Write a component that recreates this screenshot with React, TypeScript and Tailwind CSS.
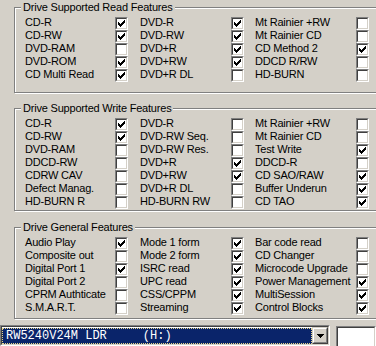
import React from "react";

type Row = [string, boolean, string, boolean, string, boolean];

const READ_ROWS: Row[] = [
  ["CD-R", true, "DVD-R", true, "Mt Rainier +RW", false],
  ["CD-RW", true, "DVD-RW", true, "Mt Rainier CD", false],
  ["DVD-RAM", false, "DVD+R", true, "CD Method 2", true],
  ["DVD-ROM", true, "DVD+RW", true, "DDCD R/RW", false],
  ["CD Multi Read", true, "DVD+R DL", false, "HD-BURN", false],
];

const WRITE_ROWS: Row[] = [
  ["CD-R", true, "DVD-R", false, "Mt Rainier +RW", false],
  ["CD-RW", true, "DVD-RW Seq.", false, "Mt Rainier CD", false],
  ["DVD-RAM", false, "DVD-RW Res.", false, "Test Write", true],
  ["DDCD-RW", false, "DVD+R", true, "DDCD-R", false],
  ["CDRW CAV", false, "DVD+RW", true, "CD SAO/RAW", true],
  ["Defect Manag.", false, "DVD+R DL", false, "Buffer Underun", true],
  ["HD-BURN R", false, "HD-BURN RW", false, "CD TAO", true],
];

const GENERAL_ROWS: Row[] = [
  ["Audio Play", true, "Mode 1 form", true, "Bar code read", false],
  ["Composite out", false, "Mode 2 form", true, "CD Changer", false],
  ["Digital Port 1", true, "ISRC read", true, "Microcode Upgrade", false],
  ["Digital Port 2", false, "UPC read", true, "Power Management", true],
  ["CPRM Authticate", false, "CSS/CPPM", true, "MultiSession", true],
  ["S.M.A.R.T.", false, "Streaming", true, "Control Blocks", true],
];

// classic 7x7 check glyph, one rect per lit pixel
const CHECK = [
  "......X",
  ".....XX",
  "X...XXX",
  "XX.XXX.",
  "XXXXX..",
  ".XXX...",
  "..X....",
];

const CheckBox = ({ checked }: { checked: boolean }) => (
  <div className="w-[13px] h-[13px] shrink-0 flex border border-t-[#808080] border-l-[#808080] border-b-white border-r-white">
    <div className="flex-1 flex items-center justify-center bg-white border border-t-[#404040] border-l-[#404040] border-b-[#d4d0c8] border-r-[#d4d0c8]">
      {checked && (
        <svg width="7" height="7" viewBox="0 0 7 7" shapeRendering="crispEdges">
          {CHECK.flatMap((line, y) =>
            line.split("").map((c, x) =>
              c === "X" ? <rect key={`${x}-${y}`} x={x} y={y} width="1" height="1" fill="#000" /> : null
            )
          )}
        </svg>
      )}
    </div>
  </div>
);

const Cell = ({ label, checked, labelWidth }: { label: string; checked: boolean; labelWidth: string }) => (
  <div className="flex items-start h-[13px]">
    <span className={`${labelWidth} h-[13px] leading-[11px] whitespace-nowrap`}>{label}</span>
    <CheckBox checked={checked} />
  </div>
);

const GroupBox = ({
  title,
  rows,
  className,
}: {
  title: string;
  rows: Row[];
  className: string;
}) => (
  <div
    className={`relative ml-[14px] w-[372px] pt-[9px] pl-[10px] border border-[#808080] shadow-[inset_1px_1px_0_#fff,1px_1px_0_#fff] ${className}`}
  >
    <span className="absolute left-[6px] -top-[7px] h-[13px] leading-[13px] px-[2px] bg-[#d4d0c8] whitespace-nowrap">
      {title}
    </span>
    <div className="flex flex-col">
      {rows.map((r, i) => (
        <div key={i} className="grid grid-cols-[115px_115px_120px]">
          <Cell label={r[0]} checked={r[1]} labelWidth="w-[90px]" />
          <Cell label={r[2]} checked={r[3]} labelWidth="w-[91px]" />
          <Cell label={r[4]} checked={r[5]} labelWidth="w-[101px]" />
        </div>
      ))}
    </div>
  </div>
);

const App = () => {
  return (
    <div className="w-[376px] h-[346px] overflow-hidden bg-[#d4d0c8] pt-[7px] text-[11px] tracking-[-0.2px] text-black font-['Liberation_Sans',Arial,sans-serif]">
      <GroupBox title="Drive Supported Read Features" rows={READ_ROWS} className="h-[86px]" />
      <GroupBox title="Drive Supported Write Features" rows={WRITE_ROWS} className="h-[103px] mt-[15px]" />
      <GroupBox title="Drive General Features" rows={GENERAL_ROWS} className="h-[92px] mt-[16px]" />

      <div className="flex items-start mt-[6px]">
        {/* drive combo */}
        <div className="w-[334px] h-[21px] flex border border-t-[#808080] border-l-[#808080] border-b-white border-r-white">
          <div className="flex-1 flex bg-white border border-t-[#404040] border-l-[#404040] border-b-[#d4d0c8] border-r-[#d4d0c8]">
            <div className="flex-1 pt-px pb-px">
              <div className="h-[16px] bg-[#0a246a] border border-dotted border-[#e8d68a] pl-[3px] text-white text-[12px] tracking-normal leading-[14px] whitespace-pre font-['Liberation_Mono','Courier_New',monospace]">
                RW5240V24M LDR     (H:)
              </div>
            </div>
            <div className="w-[16px] flex border border-t-[#d4d0c8] border-l-[#d4d0c8] border-b-[#404040] border-r-[#404040]">
              <div className="flex-1 flex items-center justify-center bg-[#d4d0c8] border border-t-white border-l-white border-b-[#808080] border-r-[#808080]">
                <svg width="7" height="4" viewBox="0 0 7 4" shapeRendering="crispEdges">
                  <path d="M0 0h7v1H0zM1 1h5v1H1zM2 2h3v1H2zM3 3h1v1H3z" fill="#000" />
                </svg>
              </div>
            </div>
          </div>
        </div>
        {/* empty box at right */}
        <div className="ml-[6px] mt-px w-[40px] h-[24px] flex border border-t-[#808080] border-l-[#808080] border-b-white border-r-white">
          <div className="flex-1 bg-white border border-t-[#404040] border-l-[#404040] border-b-[#d4d0c8] border-r-[#d4d0c8]" />
        </div>
      </div>
    </div>
  );
};

export default App;
